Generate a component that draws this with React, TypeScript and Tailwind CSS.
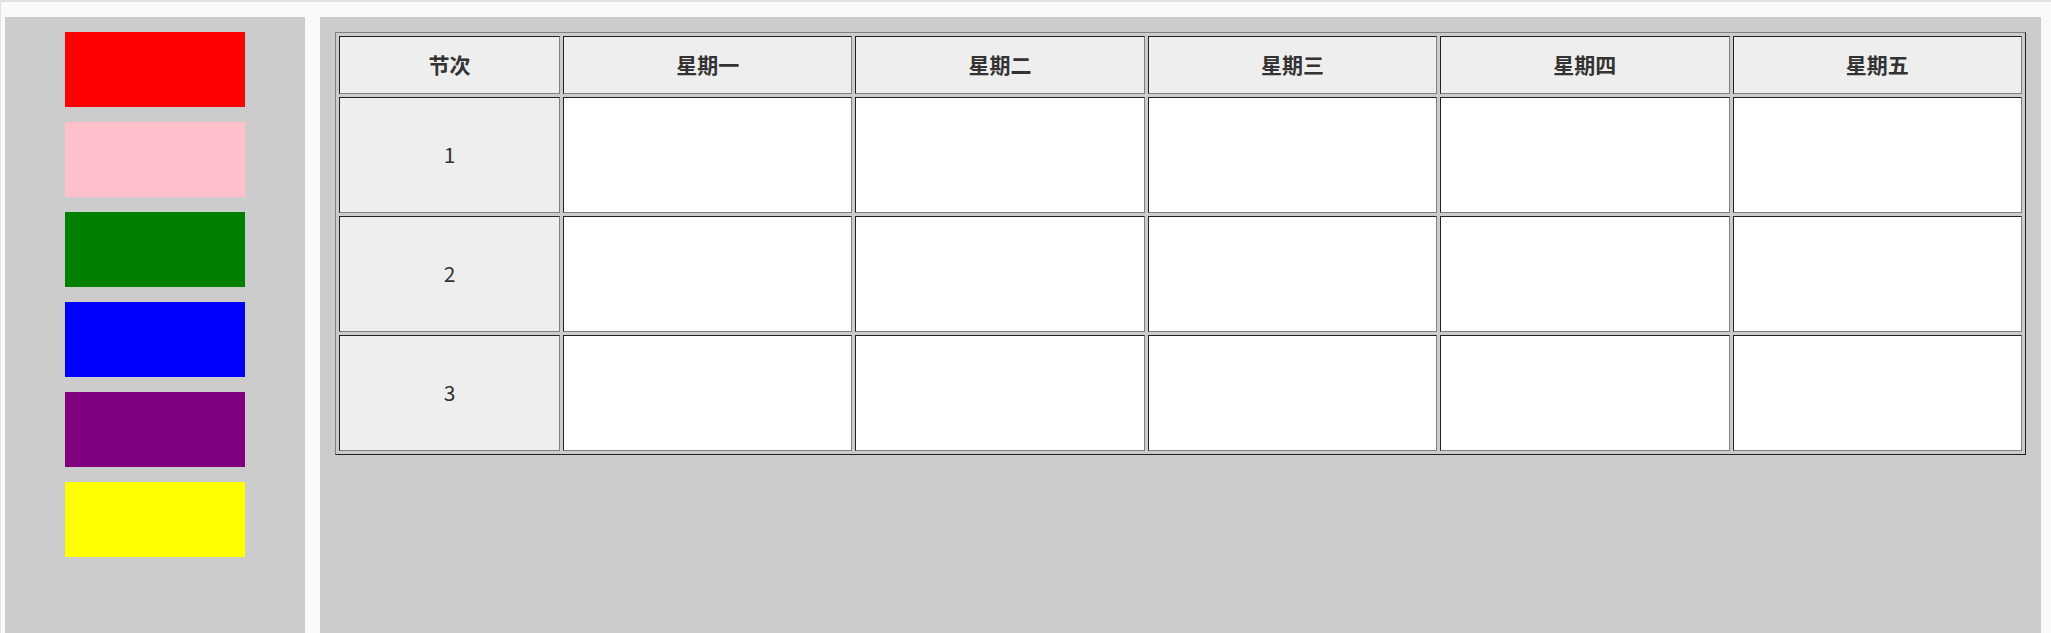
import React from "react";

const swatches = ["bg-[#ff0000]", "bg-[#ffc0cb]", "bg-[#008000]", "bg-[#0000ff]", "bg-[#800080]", "bg-[#ffff00]"];
const days = ["星期一", "星期二", "星期三", "星期四", "星期五"];
const periods = [1, 2, 3];

const cellBorder =
    "border border-solid border-t-[#222] border-l-[#222] border-r-[#808080] border-b-[#808080]";

export default function App(): JSX.Element {
    return (
        <div
            className="flex h-[633px] overflow-hidden bg-[#fafafa] border-t-2 border-l border-[#dfe2e5] pt-[15px] pl-[4px] pr-[10px] gap-[15px] text-[#333]"
            style={{ fontFamily: '"Noto Sans CJK SC", "Noto Sans", sans-serif' }}
        >
            {/* color list */}
            <div className="w-[300px] shrink-0 bg-[#cccccc] flex flex-col items-center pt-[15px] gap-[15px]">
                {swatches.map((c) => (
                    <div key={c} className={`w-[180px] h-[75px] ${c}`} />
                ))}
            </div>

            {/* timetable */}
            <div className="flex-1 bg-[#cccccc] p-[15px]">
                <table className="w-full table-fixed border-separate border-spacing-[3px] border border-solid border-t-[#808080] border-l-[#808080] border-r-[#222] border-b-[#222]">
                    <thead>
                        <tr>
                            <th className={`w-[221px] h-[58px] p-0 bg-[#eeeeee] text-[21px] font-bold ${cellBorder}`}>
                                节次
                            </th>
                            {days.map((d) => (
                                <th key={d} className={`h-[58px] p-0 bg-[#eeeeee] text-[21px] font-bold ${cellBorder}`}>
                                    {d}
                                </th>
                            ))}
                        </tr>
                    </thead>
                    <tbody>
                        {periods.map((p) => (
                            <tr key={p}>
                                <td className={`h-[116px] p-0 bg-[#eeeeee] text-center text-[21px] ${cellBorder}`}>
                                    {p}
                                </td>
                                {days.map((d) => (
                                    <td key={d} className={`h-[116px] p-0 bg-white ${cellBorder}`}></td>
                                ))}
                            </tr>
                        ))}
                    </tbody>
                </table>
            </div>
        </div>
    );
}
